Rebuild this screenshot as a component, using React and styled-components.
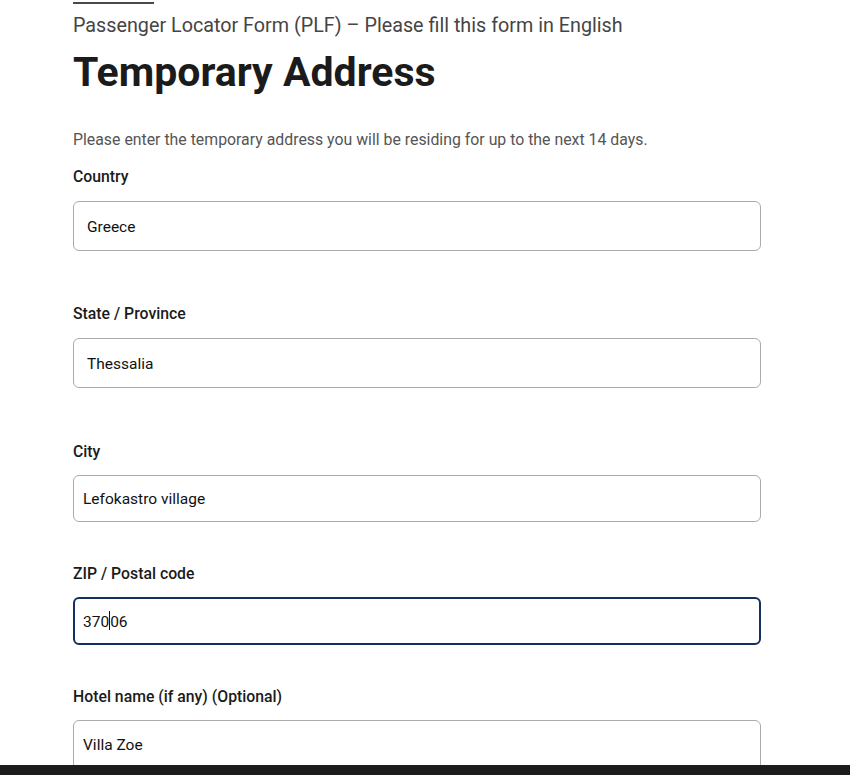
import React from 'react';
import styled, {createGlobalStyle} from 'styled-components';

const GlobalStyle = createGlobalStyle`
  body {
    margin: 0;
    background: #ffffff;
    font-family: Roboto, "Liberation Sans", sans-serif;
    color: #1b1b1b;
  }
`;

const Page = styled.main`
  padding: 0 0 40px 73px;
  width: 688px;
`;

const TopRule = styled.div`
  width: 81px;
  height: 2px;
  margin-top: 2px;
  background: #4a4a4a;
`;

const Eyebrow = styled.p`
  margin: 10px 0 0;
  font-size: 19.75px;
  line-height: 24px;
  color: #454545;
`;

const Title = styled.h1`
  margin: 10px 0 0;
  font-size: 41px;
  line-height: 48px;
  font-weight: 700;
  color: #1b1b1b;
`;

const Intro = styled.p`
  margin: 32px 0 0;
  font-size: 15.85px;
  line-height: 24px;
  color: #555555;
`;

const Group = styled.div`
  margin-top: ${props => props.gap}px;
  display: flex;
  flex-direction: column;
`;

const Label = styled.label`
  font-size: 15.8px;
  line-height: 20px;
  font-weight: 500;
  color: #1b1b1b;
  margin-bottom: ${props => props.below}px;
`;

const Field = styled.div`
  box-sizing: border-box;
  height: ${props => props.height}px;
  display: flex;
  align-items: center;
  padding-left: ${props => props.inset}px;
  padding-top: ${props => props.drop || 0}px;
  border-radius: 6px;
  font-size: 15.5px;
  color: #111111;
  ${props => props.focused
    ? 'border: 2px solid #13305f;'
    : 'border: 1px solid #ababab;'}
`;

const Caret = styled.span`
  display: inline-block;
  width: 1px;
  height: 19px;
  background: #111111;
  margin: 0 0 -3px;
  vertical-align: baseline;
`;

const BottomBar = styled.div`
  position: fixed;
  left: 0;
  right: 0;
  bottom: 0;
  height: 10px;
  background: #1c1c1c;
`;

const fields = [
  {label: 'Country', value: 'Greece', gap: 15, below: 14, height: 50, inset: 13, drop: 2},
  {label: 'State / Province', value: 'Thessalia', gap: 53, below: 14, height: 50, inset: 13, drop: 2},
  {label: 'City', value: 'Lefokastro village', gap: 54, below: 13, height: 47, inset: 9},
  {label: 'ZIP / Postal code', value: '37006', gap: 42, below: 13, height: 48, inset: 8, focused: true, caretAt: 3},
  {label: 'Hotel name (if any) (Optional)', value: 'Villa Zoe', gap: 42, below: 13, height: 50, inset: 9},
];

const App = () => (
  <>
    <GlobalStyle />
    <Page>
      <TopRule />
      <Eyebrow>Passenger Locator Form (PLF) – Please fill this form in English</Eyebrow>
      <Title>Temporary Address</Title>
      <Intro>Please enter the temporary address you will be residing for up to the next 14 days.</Intro>
      {fields.map(f => (
        <Group key={f.label} gap={f.gap}>
          <Label below={f.below}>{f.label}</Label>
          <Field height={f.height} inset={f.inset} drop={f.drop} focused={f.focused}>
            {f.focused ? (
              <span>
                {f.value.slice(0, f.caretAt)}
                <Caret />
                {f.value.slice(f.caretAt)}
              </span>
            ) : f.value}
          </Field>
        </Group>
      ))}
    </Page>
    <BottomBar />
  </>
);

export default App;
